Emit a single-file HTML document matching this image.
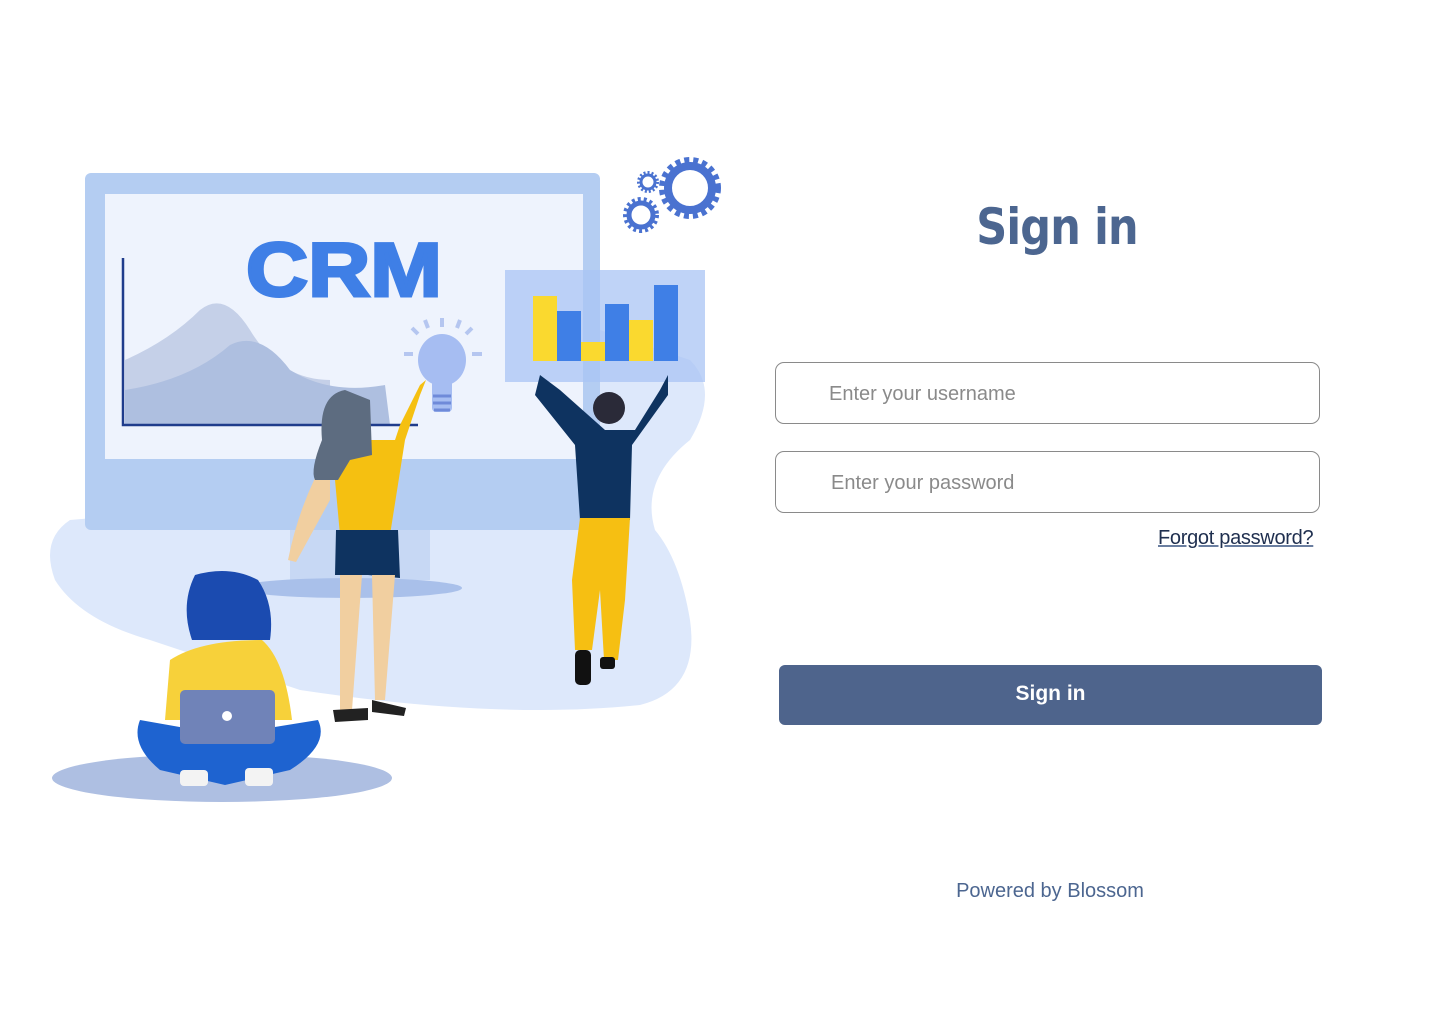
<!DOCTYPE html>
<html><head><meta charset="utf-8"><style>
html,body{margin:0;padding:0;background:#fff;width:1440px;height:1024px;overflow:hidden;font-family:"Liberation Sans","DejaVu Sans",sans-serif}
svg.ill{position:absolute;left:0;top:0}
h1{position:absolute;left:900px;width:314px;top:198px;margin:0;text-align:center;font-size:50px;font-weight:bold;color:#4c6690;letter-spacing:-1px;font-family:"DejaVu Sans","Liberation Sans",sans-serif;transform:scaleX(0.86)}
.inp{position:absolute;left:775px;width:545px;height:62px;border:1px solid #8a8a8a;border-radius:9px;box-sizing:border-box;color:#8a8a8a;font-size:20px;line-height:62px}
.fg{position:absolute;left:1158px;top:527px;font-size:20px;color:#1f2f4f;text-decoration:underline;text-decoration-color:#6a7ea0;letter-spacing:-0.3px}
.btn{position:absolute;left:779px;top:665px;width:543px;height:60px;background:#4e648c;border-radius:6px;color:#fff;font-size:21px;font-weight:bold;text-align:center;line-height:58px}
.pw{position:absolute;left:900px;width:300px;text-align:center;top:880px;color:#4c6690;font-size:20px}
</style></head><body>
<svg class="ill" width="740" height="830" viewBox="0 0 740 830">
<path d="M70 520 Q40 540 55 580 Q80 620 150 640 L300 690 Q500 720 640 705 Q700 690 690 620 Q680 560 655 530 Q640 480 690 440 Q720 390 690 360 L600 330 L300 500 Z" fill="#dde8fb"/>
<rect x="85" y="173" width="515" height="357" rx="6" fill="#b4cdf2"/>
<rect x="105" y="194" width="478" height="265" fill="#eef3fd"/>
<rect x="290" y="530" width="140" height="50" fill="#c7d8f4"/>
<ellipse cx="350" cy="588" rx="112" ry="10" fill="#a9c0ea"/>
<path d="M125 360 Q170 340 200 310 Q225 290 250 330 Q280 380 330 380 L330 425 L125 425 Z" fill="#c5d0e8"/>
<path d="M125 390 Q190 380 230 345 Q260 330 290 370 Q330 395 385 385 L390 425 L125 425 Z" fill="#aebfe0"/>
<path d="M123 258 V425 H418" fill="none" stroke="#1f3c8c" stroke-width="2.5"/>
<text x="246" y="296" font-family="Liberation Sans,sans-serif" font-weight="bold" font-size="76" fill="#3f7fe6" stroke="#3f7fe6" stroke-width="3" textLength="196" lengthAdjust="spacingAndGlyphs">CRM</text>
<ellipse cx="442" cy="360" rx="24" ry="26" fill="#a6bdf2"/>
<rect x="432" y="380" width="20" height="32" rx="4" fill="#a6bdf2"/>
<g stroke="#6f8ad9" stroke-width="3"><line x1="433" y1="396" x2="451" y2="396"/><line x1="433" y1="403" x2="451" y2="403"/><line x1="434" y1="410" x2="450" y2="410"/></g>
<g stroke="#b5c6f0" stroke-width="4"><line x1="442" y1="318" x2="442" y2="327"/><line x1="404" y1="354" x2="413" y2="354"/><line x1="472" y1="354" x2="482" y2="354"/><line x1="412" y1="328" x2="418" y2="334"/><line x1="472" y1="328" x2="466" y2="334"/><line x1="425" y1="320" x2="428" y2="328"/><line x1="460" y1="320" x2="457" y2="328"/></g>
<rect x="505" y="270" width="200" height="112" fill="#a9c4f4" opacity="0.75"/>
<rect x="533" y="296" width="24" height="65" fill="#fad92f"/>
<rect x="557" y="311" width="24" height="50" fill="#3f7fe6"/>
<rect x="581" y="342" width="24" height="19" fill="#fad92f"/>
<rect x="605" y="304" width="24" height="57" fill="#3f7fe6"/>
<rect x="629" y="320" width="24" height="41" fill="#fad92f"/>
<rect x="654" y="285" width="24" height="76" fill="#3f7fe6"/>
<g fill="none" stroke="#4a72d0"><circle cx="690" cy="188" r="22" stroke-width="8"/><circle cx="690" cy="188" r="28" stroke-width="6" stroke-dasharray="5 4"/><circle cx="641" cy="215" r="12" stroke-width="5"/><circle cx="641" cy="215" r="16" stroke-width="4" stroke-dasharray="3 3"/><circle cx="648" cy="182" r="7" stroke-width="3"/><circle cx="648" cy="182" r="9.5" stroke-width="3" stroke-dasharray="2 2"/></g>
<path d="M540 375 L535 395 L575 445 L580 520 L630 520 L632 445 L668 395 L668 375 L660 390 L635 430 L605 430 L560 390 Z" fill="#0e3360"/>
<circle cx="609" cy="408" r="16" fill="#2a2a38"/>
<path d="M580 518 L630 518 L625 600 L618 660 L604 660 L600 590 L592 650 L575 650 L572 580 Z" fill="#f6bf12"/>
<rect x="575" y="650" width="16" height="35" rx="5" fill="#111"/><rect x="600" y="657" width="15" height="12" rx="3" fill="#111"/>
<path d="M365 440 L395 440 L400 425 L420 385 L426 380 L420 395 L405 440 L390 535 L340 535 L335 480 Z" fill="#f5c011"/>
<path d="M330 450 Q300 500 288 560 L296 562 L330 500 Z" fill="#f1cfa0"/>
<path d="M336 530 L398 530 L400 578 L368 575 L335 575 Z" fill="#0e3360"/>
<path d="M340 575 L362 575 L352 710 L340 710 Z M372 575 L395 575 L385 700 L375 700 Z" fill="#f1cfa0"/>
<path d="M333 710 L368 708 L368 720 L335 722 Z M372 700 L406 708 L404 716 L372 712 Z" fill="#222"/>
<path d="M345 390 Q318 395 322 440 Q310 470 315 480 L338 480 L350 460 L372 455 L370 400 Z" fill="#5d6c80"/>
<ellipse cx="222" cy="778" rx="170" ry="24" fill="#aebfe2"/>
<path d="M195 575 Q230 565 258 580 Q275 605 270 640 L192 640 Q180 605 195 575 Z" fill="#1b4bb0"/>
<path d="M170 660 Q200 640 262 640 Q285 660 292 720 L165 720 Z" fill="#f7d13a"/>
<path d="M140 720 Q130 745 160 770 L225 785 L290 770 Q330 745 318 720 L225 735 Z" fill="#1e63d0"/>
<rect x="180" y="690" width="95" height="54" rx="5" fill="#7083b8"/>
<circle cx="227" cy="716" r="5" fill="#fff"/>
<rect x="180" y="770" width="28" height="16" rx="4" fill="#f3f3f3"/><rect x="245" y="768" width="28" height="18" rx="4" fill="#f3f3f3"/>
</svg>
<h1>Sign in</h1>
<div class="inp" style="top:362px;padding-left:53px">Enter your username</div>
<div class="inp" style="top:451px;padding-left:55px">Enter your password</div>
<div class="fg">Forgot password?</div>
<div class="btn">Sign in</div>
<div class="pw">Powered by Blossom</div>
</body></html>
